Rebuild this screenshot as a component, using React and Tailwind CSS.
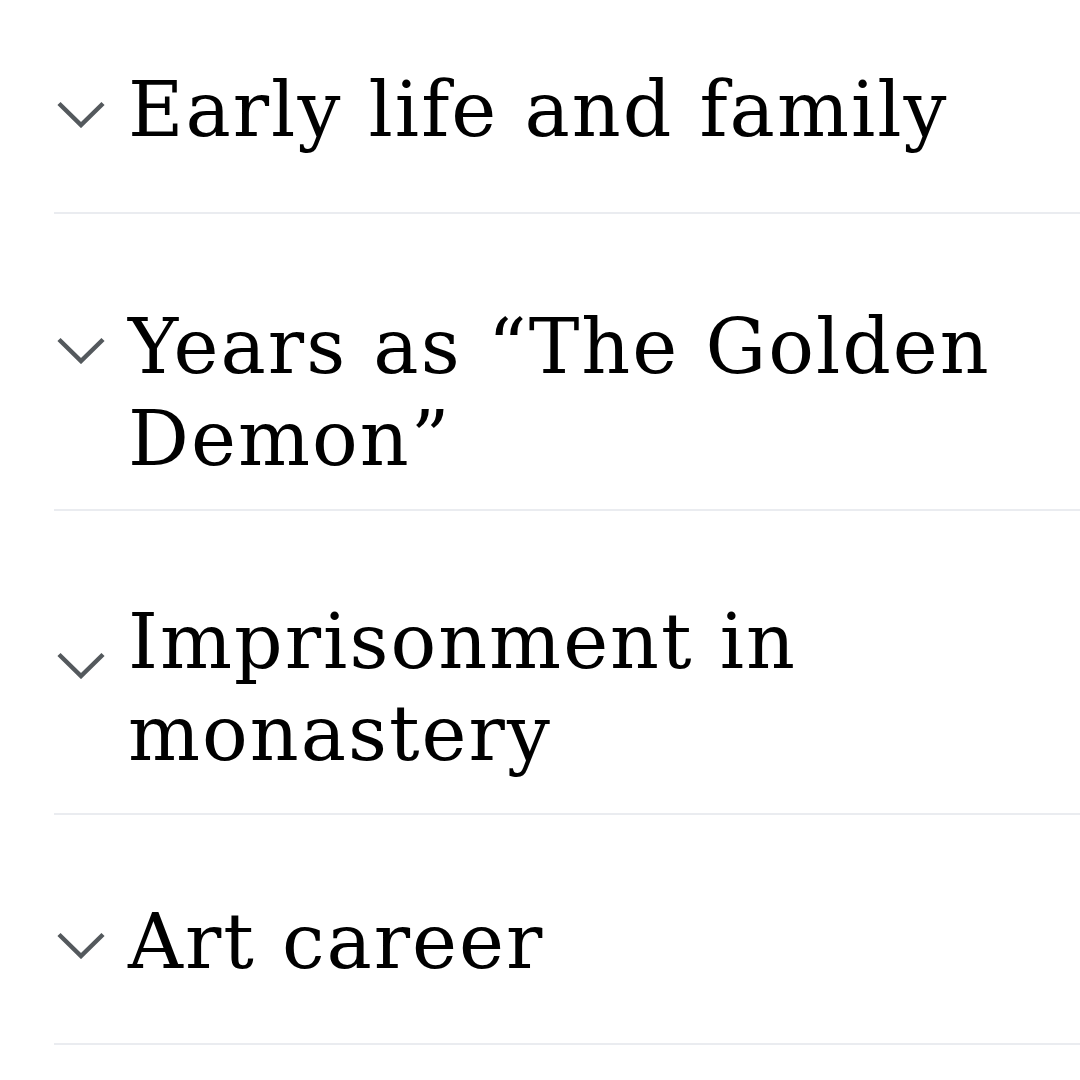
const SECTIONS = [
  { title: 'Early life and family', pad: 'pt-[64px] pb-[56px]', icon: 'mt-[37px]' },
  { title: 'Years as “The Golden Demon”', pad: 'pt-[87px] pb-[24px]', icon: 'mt-[36px]' },
  { title: 'Imprisonment in monastery', pad: 'pt-[85px] pb-[33px]', icon: 'mt-[56px]' },
  { title: 'Art career', pad: 'pt-[81px] pb-[55px]', icon: 'mt-[36px]' },
]

function Chevron() {
  return (
    <svg width="48" height="27" viewBox="0 0 48 27" fill="none" className="block shrink-0">
      <path d="M2 2.5 L24 24 L46 2.5" stroke="#54595d" strokeWidth="4.5" />
    </svg>
  )
}

export default function App() {
  return (
    <div className="min-h-[1080px] bg-white pl-[54px] overflow-hidden" style={{ fontFamily: '"DejaVu Serif", serif' }}>
      {SECTIONS.map(s => (
        <div key={s.title} className={`flex items-start border-b-2 border-[#eaecf0] ${s.pad}`}>
          <div className="w-[74px] shrink-0 pl-[3px]">
            <div className={s.icon}>
              <Chevron />
            </div>
          </div>
          <h2 className="text-[76px] leading-[92px] tracking-[2px] text-black font-normal pr-[40px]">{s.title}</h2>
        </div>
      ))}
    </div>
  )
}
